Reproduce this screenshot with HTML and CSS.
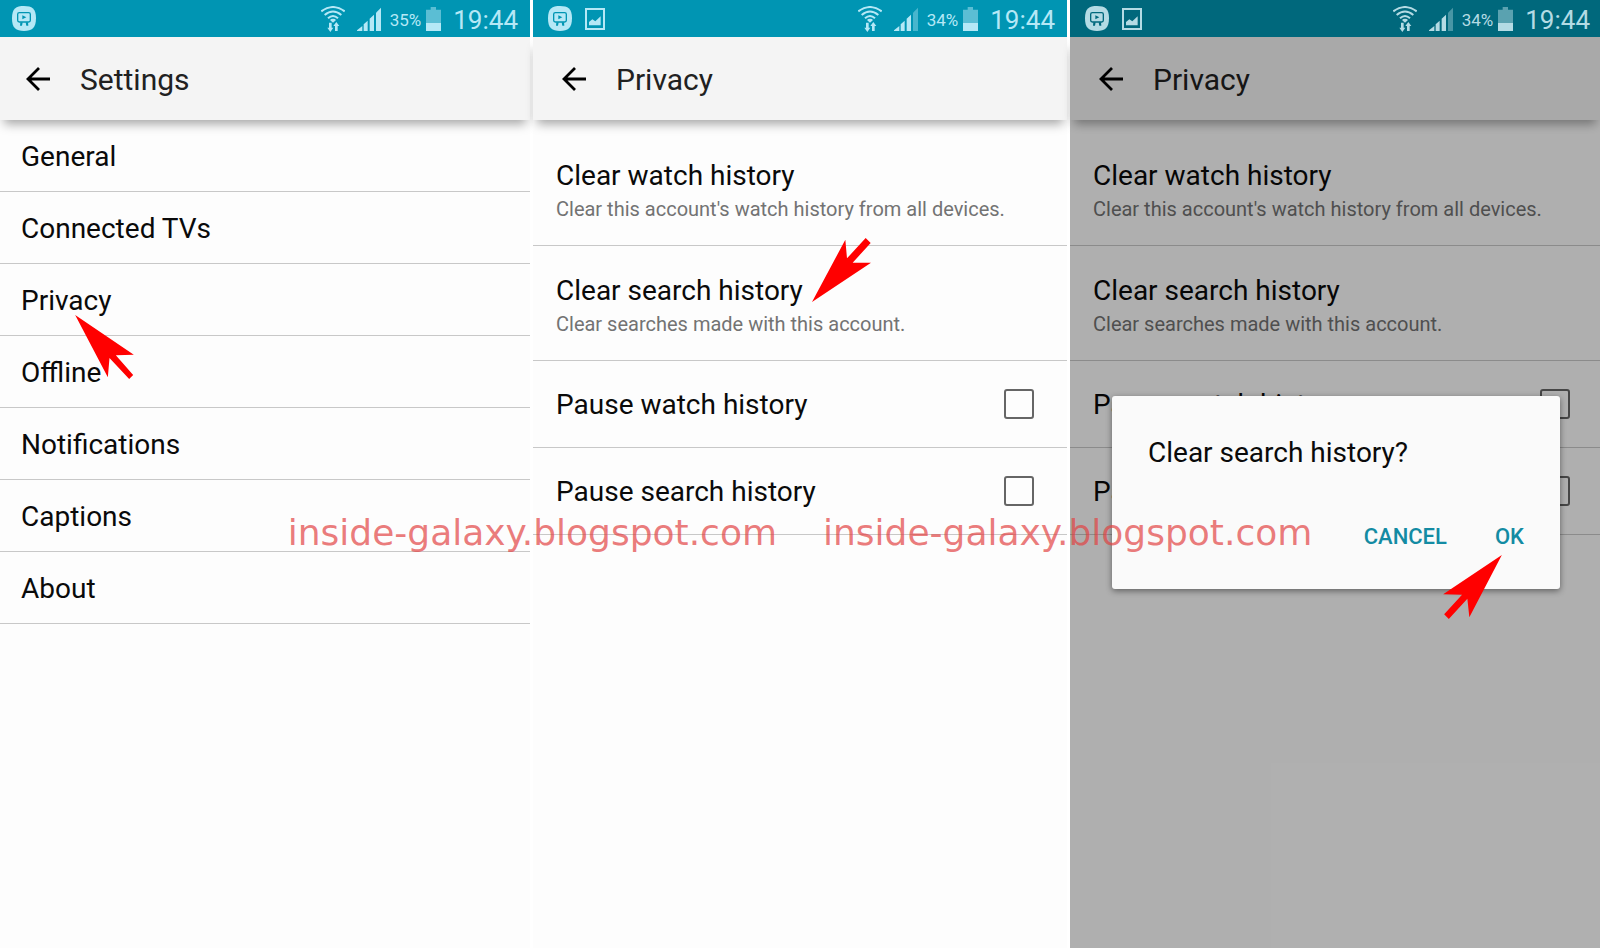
FILE: index.html
```
<!DOCTYPE html>
<html lang="en">
<head>
    <meta charset="UTF-8">
    <meta name="viewport" content="width=device-width, initial-scale=1.0">
    <title>Clear search history</title>
    <link rel="stylesheet" href="styles.css">
</head>
<body>
    <!-- shared icons -->
    <svg class="sprite" aria-hidden="true">
        <symbol id="icon-tv" viewBox="0 0 72 75">
            <path fill="currentColor" d="M36 0C60 0 72 8 72 37S60 75 36 75 0 67 0 37 12 0 36 0z"/>
            <g class="cutout">
                <rect x="17" y="20" width="38" height="28" rx="5" fill="none" stroke-width="4"/>
                <path class="solid" d="M31 28l12 6-12 6zM25 49h7l-2 10h-6zM41 49h7l1 10h-6z"/>
            </g>
        </symbol>
        <symbol id="icon-picture" viewBox="0 0 60 66">
            <rect x="3" y="3" width="54" height="60" fill="none" stroke="currentColor" stroke-width="6"/>
            <path fill="currentColor" d="M12 52V42l10-8 9 6 16-15v27z"/>
        </symbol>
        <symbol id="icon-wifi" viewBox="0 0 72 78">
            <g fill="none" stroke="currentColor" stroke-width="6">
                <path d="M1 16Q36-10 71 16"/>
                <path d="M11 27Q36 6 61 27"/>
                <path d="M21 37Q36 23 51 37"/>
            </g>
            <path fill="currentColor" d="M36 38q6 0 9 4l-9 8-9-8q3-4 9-4z"/>
            <path fill="currentColor" d="M24 50h8v15h5l-9 13-9-13h5zM42 75V60h-5l9-12 9 12h-5v15z"/>
        </symbol>
        <symbol id="icon-signal" viewBox="0 0 72 72">
            <path fill="currentColor" d="M0 72v-2l16-13v15zM20 72V52l12-11v31zM38 72V35l13-12v49z"/>
        </symbol>
        <symbol id="icon-battery" viewBox="0 0 45 72">
            <path fill="currentColor" opacity=".5" d="M14 0h16v8h15v40H0V8h14z"/>
            <path fill="currentColor" d="M0 48h45v24H0z"/>
        </symbol>
        <symbol id="icon-back" viewBox="0 0 24 24">
            <path d="M13 1L2 12l11 11M2 12h22" fill="none" stroke="currentColor" stroke-width="2.800"/>
        </symbol>
    </svg>

    <main class="screens">
        <section class="screen">
            <div class="status-bar">
                <svg class="icon-tv"><use href="#icon-tv"/></svg>
                <div class="status-right">
                    <svg class="icon-wifi"><use href="#icon-wifi"/></svg>
                    <svg class="icon-signal" viewBox="0 0 72 72"><use href="#icon-signal"/><path fill="currentColor" d="M57 72V17L72 2v70z"/></svg>
                    <span class="percent">35%</span>
                    <svg class="icon-battery"><use href="#icon-battery"/></svg>
                    <span class="clock">19:44</span>
                </div>
            </div>
            <header class="app-bar">
                <button class="back" aria-label="Back"><svg><use href="#icon-back"/></svg></button>
                <h1>Settings</h1>
            </header>
            <ul class="menu">
                <li><a href="#general">General</a></li>
                <li><a href="#tvs">Connected TVs</a></li>
                <li>
                    <a href="#privacy">Privacy</a>
                    <svg class="pointer pointer-privacy" viewBox="225 583 176 192"><path d="M225 583L401 702 347 704 399 763 387 775 328 712 323 770z"/></svg>
                </li>
                <li><a href="#offline">Offline</a></li>
                <li><a href="#notifications">Notifications</a></li>
                <li><a href="#captions">Captions</a></li>
                <li><a href="#about">About</a></li>
            </ul>
        </section>

        <section class="screen inner">
            <div class="status-bar">
                <svg class="icon-tv"><use href="#icon-tv"/></svg>
                <svg class="icon-picture"><use href="#icon-picture"/></svg>
                <div class="status-right">
                    <svg class="icon-wifi"><use href="#icon-wifi"/></svg>
                    <svg class="icon-signal" viewBox="0 0 72 72"><use href="#icon-signal"/><path fill="currentColor" opacity=".4" d="M57 72V17L72 2v70z"/></svg>
                    <span class="percent">34%</span>
                    <svg class="icon-battery"><use href="#icon-battery"/></svg>
                    <span class="clock">19:44</span>
                </div>
            </div>
            <header class="app-bar">
                <button class="back" aria-label="Back"><svg><use href="#icon-back"/></svg></button>
                <h1>Privacy</h1>
            </header>
            <ul class="options">
                <li>
                    <button class="action">Clear watch history<small>Clear this account's watch history from all devices.</small></button>
                </li>
                <li>
                    <button class="action">Clear search history<small>Clear searches made with this account.</small></button>
                    <svg class="pointer pointer-search" viewBox="67 53 177 192"><path d="M67 245L167 58 172 114 228 53 243 68 189 127 244 127z"/></svg>
                </li>
                <li><label class="toggle">Pause watch history<input type="checkbox"></label></li>
                <li><label class="toggle">Pause search history<input type="checkbox"></label></li>
            </ul>
        </section>

        <section class="screen inner dimmed">
            <div class="status-bar">
                <svg class="icon-tv"><use href="#icon-tv"/></svg>
                <svg class="icon-picture"><use href="#icon-picture"/></svg>
                <div class="status-right">
                    <svg class="icon-wifi"><use href="#icon-wifi"/></svg>
                    <svg class="icon-signal" viewBox="0 0 72 72"><use href="#icon-signal"/><path fill="currentColor" opacity=".4" d="M57 72V17L72 2v70z"/></svg>
                    <span class="percent">34%</span>
                    <svg class="icon-battery"><use href="#icon-battery"/></svg>
                    <span class="clock">19:44</span>
                </div>
            </div>
            <header class="app-bar">
                <button class="back" aria-label="Back"><svg><use href="#icon-back"/></svg></button>
                <h1>Privacy</h1>
            </header>
            <ul class="options">
                <li>
                    <button class="action">Clear watch history<small>Clear this account's watch history from all devices.</small></button>
                </li>
                <li>
                    <button class="action">Clear search history<small>Clear searches made with this account.</small></button>
                </li>
                <li><label class="toggle">Pause watch history<input type="checkbox"></label></li>
                <li><label class="toggle">Pause search history<input type="checkbox"></label></li>
            </ul>
            <div class="overlay">
                <div class="dialog" role="dialog" aria-labelledby="dialog-title">
                    <h2 id="dialog-title">Clear search history?</h2>
                    <div class="dialog-buttons">
                        <button>CANCEL</button>
                        <button>OK</button>
                    </div>
                    <svg class="pointer pointer-ok" viewBox="310 525 177 193"><path d="M487 525L310 643 367 645 313 704 327 718 383 657 389 713z"/></svg>
                </div>
            </div>
        </section>

        <div class="watermark">
            <span>inside-galaxy.blogspot.com</span>
            <span>inside-galaxy.blogspot.com</span>
        </div>
    </main>
</body>
</html>
```
FILE: styles.css
```
* {
    box-sizing: border-box;
}
body {
    margin: 0;
    background: #fff;
    color: #0a0a0a;
    font-family: Roboto, "Liberation Sans", sans-serif;
    font-size: 28px;
}
h1, h2, ul {
    margin: 0;
    padding: 0;
    font-weight: 400;
}
ul {
    list-style: none;
}
button {
    padding: 0;
    border: none;
    background: none;
    color: inherit;
    font: inherit;
    text-align: left;
    cursor: pointer;
}
svg {
    display: block;
}
.sprite {
    position: absolute;
    width: 0;
    height: 0;
}
.screens {
    position: relative;
    display: grid;
    grid-template-columns: 530fr 534fr 530fr;
    gap: 3px;
    min-height: 100vh;
}
.screen {
    --bar: #0095b3;
    position: relative;
    min-width: 0;
    background: #fdfdfd;
}

/* status bar */
.status-bar {
    display: flex;
    align-items: center;
    height: 37px;
    padding: 0 12px;
    background: var(--bar);
    color: #b5e8f6;
}
.inner .status-bar {
    padding-left: 15px;
}
.dimmed {
    --bar: #00687c;
}
.dimmed .status-bar {
    padding-right: 10px;
    color: #b4dbe4;
}
.cutout {
    stroke: var(--bar);
}
.cutout .solid {
    fill: var(--bar);
    stroke: none;
}
.status-right {
    display: flex;
    align-items: center;
    margin-left: auto;
}
.icon-tv {
    width: 24px;
    height: 25px;
}
.icon-picture {
    width: 20px;
    height: 22px;
    margin-left: 13px;
}
.icon-wifi {
    width: 24px;
    height: 26px;
    margin-right: 12px;
}
.icon-signal {
    width: 24px;
    height: 24px;
    margin-right: 9px;
}
.icon-battery {
    width: 15px;
    height: 24px;
    margin: 0 12px 0 5px;
}
.percent {
    padding-top: 2px;
    font-size: 17px;
}
.clock {
    padding-top: 2px;
    font-size: 26px;
}

/* title bar */
.app-bar {
    position: relative;
    display: flex;
    align-items: center;
    gap: 30px;
    height: 83px;
    padding: 0 26px;
    background: #f4f4f4;
    box-shadow: 0 8px 10px -4px rgba(0, 0, 0, 0.35);
}
.inner .app-bar {
    padding-left: 29px;
}
.app-bar h1 {
    padding-top: 2px;
    color: #212121;
    font-size: 30px;
    line-height: 36px;
}
.back svg {
    width: 24px;
    height: 24px;
    color: #000;
}

/* lists */
.menu li,
.options li {
    position: relative;
    border-bottom: 1px solid #c8c8c8;
}
.menu a {
    display: block;
    padding: 2px 21px 0;
    color: inherit;
    line-height: 69px;
    text-decoration: none;
}
.options {
    padding-top: 11px;
}
.action {
    display: block;
    width: 100%;
    padding: 27px 23px 21px;
    line-height: 36px;
}
.action small {
    display: block;
    color: #737373;
    font-size: 20px;
    line-height: 30px;
}
.toggle {
    display: flex;
    align-items: center;
    justify-content: space-between;
    height: 86px;
    padding: 0 33px 0 23px;
}
.dimmed .toggle {
    padding-right: 30px;
}
.toggle input {
    appearance: none;
    width: 30px;
    height: 30px;
    margin: 0;
    border: 2px solid #666;
    border-radius: 3px;
}

/* dialog */
.overlay {
    position: absolute;
    inset: 37px 0 0;
    display: flex;
    align-items: center;
    padding: 0 40px 0 42px;
    background: rgba(0, 0, 0, 0.305);
}
.dialog {
    position: relative;
    width: 100%;
    padding: 39px 36px 37px;
    border-radius: 3px;
    background: #fafafa;
    box-shadow: 0 2px 6px rgba(0, 0, 0, 0.45);
}
.dialog h2 {
    font-size: 28px;
    line-height: 36px;
}
.dialog-buttons {
    display: flex;
    justify-content: flex-end;
    gap: 48px;
    margin-top: 51px;
}
.dialog-buttons button {
    color: #138ba3;
    font-size: 22px;
    font-weight: 500;
    line-height: 30px;
}

/* red pointers */
.pointer {
    position: absolute;
    z-index: 2;
    width: 59px;
    height: 64px;
    fill: #f00;
}
.pointer-privacy {
    top: 51px;
    left: 75px;
}
.pointer-search {
    top: -8px;
    left: 279px;
}
.pointer-ok {
    right: 58px;
    bottom: -30px;
}

.watermark {
    position: absolute;
    top: 511px;
    left: 0;
    right: 0;
    z-index: 3;
    display: flex;
    justify-content: center;
    gap: 46px;
    color: rgba(226, 66, 66, 0.7);
    font-family: "DejaVu Sans", sans-serif;
    font-size: 36px;
    line-height: 44px;
    pointer-events: none;
}
```
